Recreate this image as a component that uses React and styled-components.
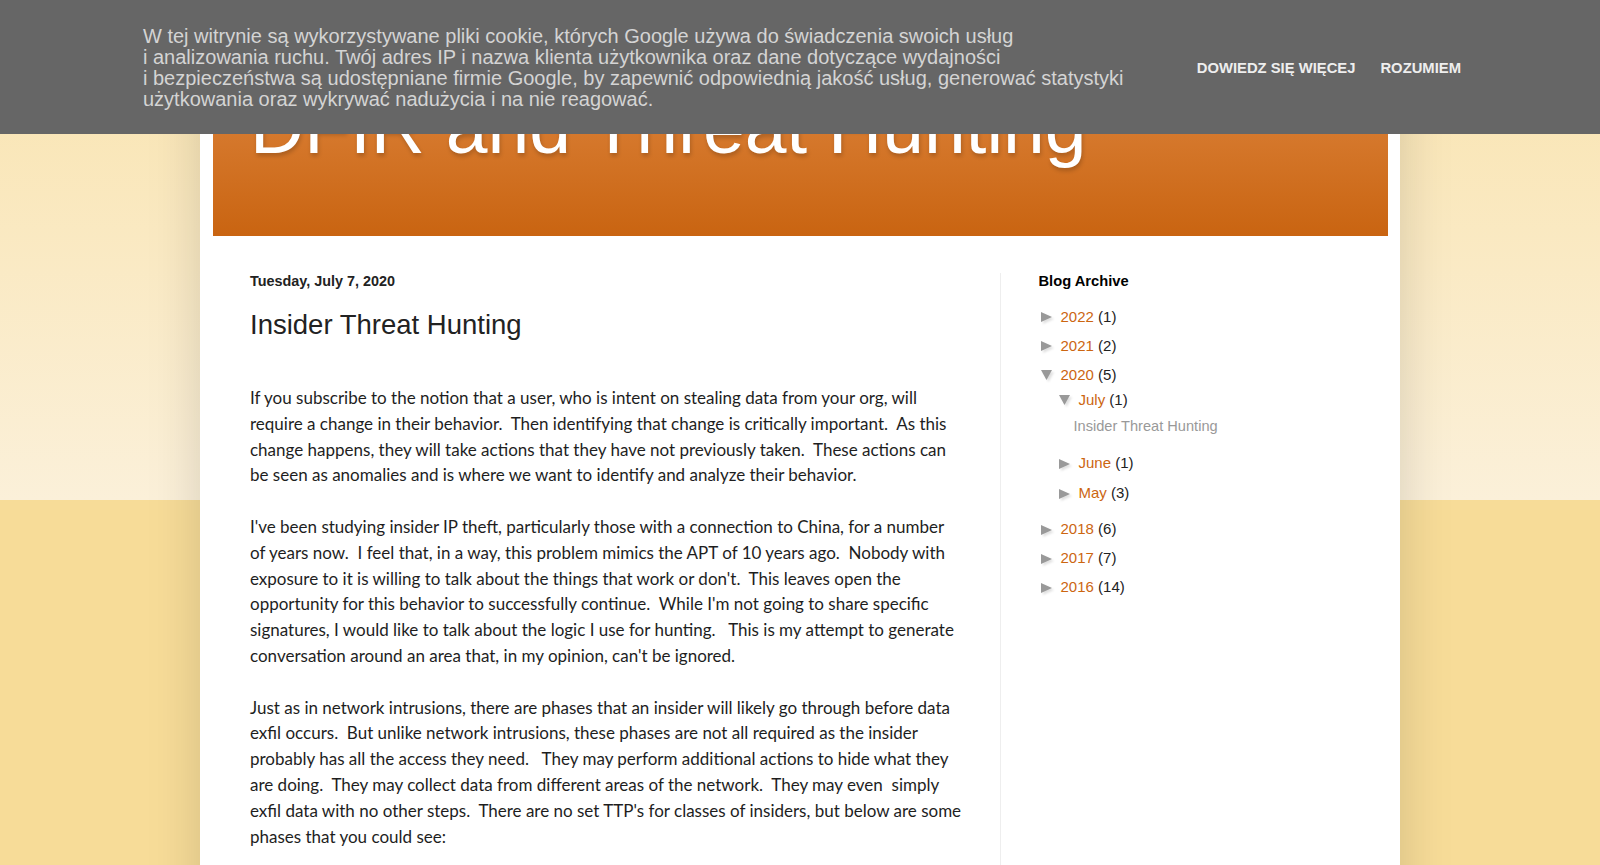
import React from "react";
import styled, { createGlobalStyle } from "styled-components";

const GlobalStyle = createGlobalStyle`
  html, body {
    margin: 0;
    padding: 0;
    overflow: hidden;
  }
  body {
    font-family: "Liberation Sans", Arial, sans-serif;
    background: linear-gradient(#f9e3ad, #fbf0d9) 0 0 / 100% 500px no-repeat, #f7dc98;
    min-height: 865px;
  }
`;

// cookie notice pinned over the top of the page
const CookieBar = styled.div`
  position: fixed;
  top: 0;
  left: 0;
  right: 0;
  height: 134px;
  background: #666;
  display: flex;
  align-items: center;
  justify-content: space-between;
  padding: 1px 139px 0 143px;
  box-sizing: border-box;
  z-index: 10;
`;

const CookieText = styled.div`
  font-size: 20px;
  line-height: 21px;
  color: #d4d4d4;
  white-space: nowrap;
`;

const CookieActions = styled.div`
  display: flex;
  gap: 25px;
`;

const CookieButton = styled.a`
  font-size: 14.8px;
  font-weight: bold;
  color: #eee;
  text-decoration: none;
  cursor: pointer;
`;

const Page = styled.div`
  padding-top: 40px;
`;

const Content = styled.div`
  width: 1200px;
  margin: 0 auto;
  background: #fff;
  box-shadow: 0 0 50px rgba(0, 0, 0, 0.15);
  padding: 12.5px;
  box-sizing: border-box;
  min-height: 900px;
`;

const Header = styled.header`
  background: linear-gradient(#df8842, #c96411);
  padding: 31.5px 37.5px 66px;
`;

const BlogTitle = styled.h1`
  margin: 0;
  font-size: 75px;
  font-weight: normal;
  line-height: normal;
  color: #fff;
  text-shadow: 1px 2.5px 4px rgba(0, 0, 0, 0.2);
`;

const Columns = styled.div`
  display: grid;
  grid-template-columns: 1fr 387.5px;
  padding-top: 36.5px;
`;

const Main = styled.main`
  padding: 0 37.5px;
`;

const DateHeader = styled.h2`
  margin: 0;
  font-size: 14.4px;
  font-weight: bold;
  line-height: normal;
  color: #222;
`;

const PostTitle = styled.h3`
  margin: 20px 0 0;
  font-size: 27.5px;
  font-weight: normal;
  line-height: normal;
  color: #222;
`;

const PostBody = styled.div`
  margin-top: 44.5px;
  font-family: Lato, "Liberation Sans", sans-serif;
  font-size: 17px;
  line-height: 25.8px;
  color: #1e1e1e;
  white-space: nowrap;
`;

const Paragraph = styled.p`
  margin: 0 0 25.8px;
`;

const Sidebar = styled.aside`
  border-left: 1px solid #eee;
  padding: 0 37.5px;
  min-height: 700px;
`;

const WidgetTitle = styled.h2`
  margin: 0 0 13.5px;
  font-size: 14.7px;
  font-weight: bold;
  line-height: normal;
  color: #000;
`;

const ArchiveList = styled.ul`
  list-style: none;
  margin: 0;
  padding: 0;
  font-size: 15px;
  line-height: 18px;
`;

const YearItem = styled.li`
  padding: 5.5px 0;
`;

const SubList = styled.ul`
  list-style: none;
  margin: 1px 0 1px 18px;
  padding: 0;
`;

const MonthItem = styled.li`
  padding: 6px 0;
`;

const PostList = styled.ul`
  list-style: none;
  margin: 8.3px 0 7.5px 17px;
  padding: 0;
  font-size: 14.6px;
`;

const PostLink = styled.a`
  color: #999;
  text-decoration: none;
`;

const Label = styled.div`
  display: flex;
  align-items: center;
  white-space: pre;
`;

const Zippy = styled.svg`
  width: 11px;
  height: 10px;
  margin: 1px 9px 0 2px;
  flex: none;
  filter: drop-shadow(2px 2px 1px rgba(0, 0, 0, 0.12));
`;

const ArchiveLink = styled.a`
  color: #cc6611;
  text-decoration: none;
`;

const Count = styled.span`
  color: #222;
`;

const Arrow = ({ open }) => (
  <Zippy viewBox="0 0 11 10">
    {open ? <polygon points="0,0 11,0 5.5,10" fill="#999" /> : <polygon points="0,0 11,5 0,10" fill="#999" />}
  </Zippy>
);

const Entry = ({ open, name, count }) => (
  <Label>
    <Arrow open={open} />
    <ArchiveLink href="#">{name}</ArchiveLink>
    <Count> ({count})</Count>
  </Label>
);

const years = [
  { name: "2022", count: 1 },
  { name: "2021", count: 2 },
  { name: "2020", count: 5, open: true },
  { name: "2018", count: 6 },
  { name: "2017", count: 7 },
  { name: "2016", count: 14 },
];

const months = [
  { name: "July", count: 1, open: true, posts: ["Insider Threat Hunting"] },
  { name: "June", count: 1 },
  { name: "May", count: 3 },
];

const App = () => {
  return (
    <>
      <GlobalStyle />
      <CookieBar>
        <CookieText>
          W tej witrynie są wykorzystywane pliki cookie, których Google używa do świadczenia swoich usług
          <br />
          i analizowania ruchu. Twój adres IP i nazwa klienta użytkownika oraz dane dotyczące wydajności
          <br />
          i bezpieczeństwa są udostępniane firmie Google, by zapewnić odpowiednią jakość usług, generować statystyki
          <br />
          użytkowania oraz wykrywać nadużycia i na nie reagować.
        </CookieText>
        <CookieActions>
          <CookieButton>DOWIEDZ SIĘ WIĘCEJ</CookieButton>
          <CookieButton>ROZUMIEM</CookieButton>
        </CookieActions>
      </CookieBar>

      <Page>
        <Content>
          <Header>
            <BlogTitle>DFIR and Threat Hunting</BlogTitle>
          </Header>
          <Columns>
            <Main>
              <DateHeader>Tuesday, July 7, 2020</DateHeader>
              <PostTitle>Insider Threat Hunting</PostTitle>
              <PostBody>
                <Paragraph>
                  If you subscribe to the notion that a user, who is intent on stealing data from your org, will
                  <br />
                  require a change in their behavior.&nbsp; Then identifying that change is critically important.&nbsp; As this
                  <br />
                  change happens, they will take actions that they have not previously taken.&nbsp; These actions can
                  <br />
                  be seen as anomalies and is where we want to identify and analyze their behavior.
                </Paragraph>
                <Paragraph>
                  I've been studying insider IP theft, particularly those with a connection to China, for a number
                  <br />
                  of years now.&nbsp; I feel that, in a way, this problem mimics the APT of 10 years ago.&nbsp; Nobody with
                  <br />
                  exposure to it is willing to talk about the things that work or don't.&nbsp; This leaves open the
                  <br />
                  opportunity for this behavior to successfully continue.&nbsp; While I'm not going to share specific
                  <br />
                  signatures, I would like to talk about the logic I use for hunting.&nbsp;&nbsp; This is my attempt to generate
                  <br />
                  conversation around an area that, in my opinion, can't be ignored.
                </Paragraph>
                <Paragraph>
                  Just as in network intrusions, there are phases that an insider will likely go through before data
                  <br />
                  exfil occurs.&nbsp; But unlike network intrusions, these phases are not all required as the insider
                  <br />
                  probably has all the access they need.&nbsp;&nbsp; They may perform additional actions to hide what they
                  <br />
                  are doing.&nbsp; They may collect data from different areas of the network.&nbsp; They may even&nbsp; simply
                  <br />
                  exfil data with no other steps.&nbsp; There are no set TTP's for classes of insiders, but below are some
                  <br />
                  phases that you could see:
                </Paragraph>
              </PostBody>
            </Main>

            <Sidebar>
              <WidgetTitle>Blog Archive</WidgetTitle>
              <ArchiveList>
                {years.map((y) => (
                  <YearItem key={y.name}>
                    <Entry open={y.open} name={y.name} count={y.count} />
                    {y.open && (
                      <SubList>
                        {months.map((m) => (
                          <MonthItem key={m.name}>
                            <Entry open={m.open} name={m.name} count={m.count} />
                            {m.posts && (
                              <PostList>
                                {m.posts.map((p) => (
                                  <li key={p}>
                                    <PostLink href="#">{p}</PostLink>
                                  </li>
                                ))}
                              </PostList>
                            )}
                          </MonthItem>
                        ))}
                      </SubList>
                    )}
                  </YearItem>
                ))}
              </ArchiveList>
            </Sidebar>
          </Columns>
        </Content>
      </Page>
    </>
  );
};

export default App;
